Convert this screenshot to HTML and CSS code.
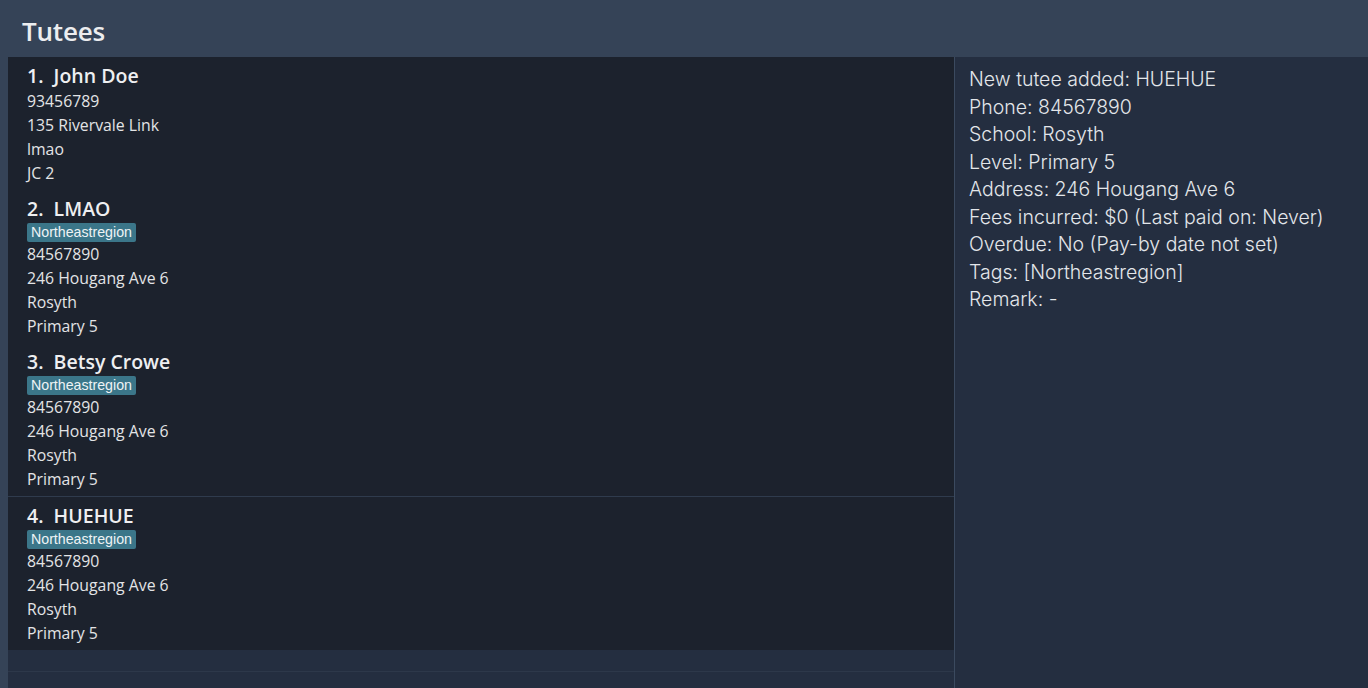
FILE: index.html
```html
<!DOCTYPE html>
<html>
<head>
<meta charset="utf-8">
<link rel="stylesheet" href="styles.css">
</head>
<body>
<div class="app">
  <header class="topbar"><h1 class="title">Tutees</h1></header>
  <main class="content">
    <section class="list">
      <div class="card">
        <div class="name">1.&nbsp;&nbsp;John Doe</div>
        <div class="row">93456789</div>
        <div class="row">135 Rivervale Link</div>
        <div class="row">lmao</div>
        <div class="row">JC 2</div>
      </div>
      <div class="card">
        <div class="name">2.&nbsp;&nbsp;LMAO</div>
        <div class="tags"><span class="tag">Northeastregion</span></div>
        <div class="row">84567890</div>
        <div class="row">246 Hougang Ave 6</div>
        <div class="row">Rosyth</div>
        <div class="row">Primary 5</div>
      </div>
      <div class="card">
        <div class="name">3.&nbsp;&nbsp;Betsy Crowe</div>
        <div class="tags"><span class="tag">Northeastregion</span></div>
        <div class="row">84567890</div>
        <div class="row">246 Hougang Ave 6</div>
        <div class="row">Rosyth</div>
        <div class="row">Primary 5</div>
      </div>
      <div class="card card-sep">
        <div class="name">4.&nbsp;&nbsp;HUEHUE</div>
        <div class="tags"><span class="tag">Northeastregion</span></div>
        <div class="row">84567890</div>
        <div class="row">246 Hougang Ave 6</div>
        <div class="row">Rosyth</div>
        <div class="row">Primary 5</div>
      </div>
      <div class="empty-row"></div>
    </section>
    <section class="result">
      <p>New tutee added: HUEHUE</p>
      <p>Phone: 84567890</p>
      <p>School: Rosyth</p>
      <p>Level: Primary 5</p>
      <p>Address: 246 Hougang Ave 6</p>
      <p>Fees incurred: $0 (Last paid on: Never)</p>
      <p>Overdue: No (Pay-by date not set)</p>
      <p>Tags: [Northeastregion]</p>
      <p>Remark: -</p>
    </section>
  </main>
</div>
</body>
</html>
```

FILE: styles.css
```css
html, body {
  margin: 0;
  padding: 0;
  height: 100%;
  background: #354357;
}
.app {
  display: flex;
  flex-direction: column;
  height: 688px;
  overflow: hidden;
}
.topbar {
  height: 57px;
  flex: 0 0 57px;
  display: flex;
  align-items: center;
  padding: 4px 0 0 22px;
  box-sizing: border-box;
}
.title {
  margin: 0;
  font-family: "Open Sans", "Noto Sans", sans-serif;
  font-weight: 600;
  font-size: 26px;
  color: #ecedef;
  letter-spacing: -0.2px;
}
.content {
  flex: 1;
  display: flex;
  padding-left: 8px;
  min-height: 0;
}
.list {
  width: 946px;
  flex: 0 0 946px;
  background: #242e40;
  border-right: 1px solid #3b4a5f;
  display: flex;
  flex-direction: column;
}
.card {
  background: #1c222d;
  padding: 6px 19px 5px;
  font-family: "Open Sans", "Noto Sans", sans-serif;
  color: #e3e4e6;
}
.card-sep {
  border-top: 1px solid #2f3b4d;
}
.name {
  height: 26px;
  line-height: 26px;
  font-size: 19.5px;
  font-weight: 600;
  color: #eeeff1;
}
.tags {
  height: 20px;
  display: flex;
  align-items: center;
}
.tag {
  display: inline-block;
  background: #3b7689;
  color: #eef3f5;
  font-family: "Liberation Sans", Arial, sans-serif;
  font-size: 14.2px;
  line-height: 19px;
  padding: 0 4px;
  border-radius: 2px;
}
.row {
  height: 24px;
  line-height: 24px;
  font-size: 15.8px;
}
.empty-row {
  height: 21px;
  border-bottom: 1px solid #2d384a;
}
.result {
  flex: 1;
  background: #242e40;
  padding: 9px 14px;
  font-family: "Inter", "Open Sans", sans-serif;
  font-weight: 300;
  font-size: 19.5px;
  color: #e3e6ea;
}
.result p {
  margin: 0;
  line-height: 27.5px;
  letter-spacing: 0;
}
```
